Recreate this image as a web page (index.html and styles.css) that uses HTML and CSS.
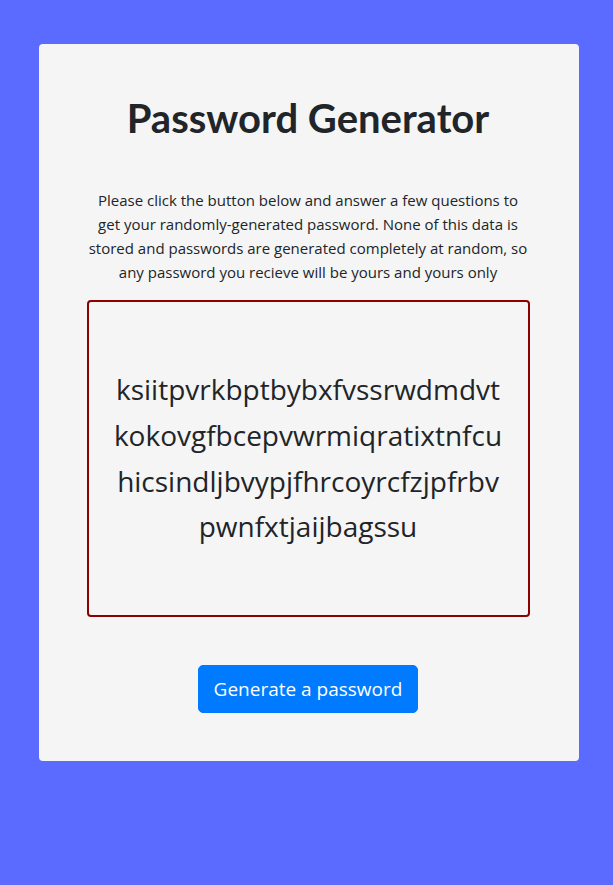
FILE: index.html
```html
<!DOCTYPE html>
<html lang="en">
<head>
<meta charset="utf-8">
<title>Password Generator</title>
<link rel="stylesheet" href="styles.css">
</head>
<body>
<main class="container">
  <section class="card">
    <h1 class="title">Password Generator</h1>
    <p class="intro">Please click the button below and answer a few questions to get your randomly-generated password. None of this data is stored and passwords are generated completely at random, so any password you recieve will be yours and yours only</p>
    <div class="output">
      <p class="password">ksiitpvrkbptbybxfvssrwdmdvt kokovgfbcepvwrmiqratixtnfcu hicsindljbvypjfhrcoyrcfzjpfrbv pwnfxtjaijbagssu</p>
    </div>
    <div class="actions">
      <button class="btn">Generate a password</button>
    </div>
  </section>
</main>
</body>
</html>
```
FILE: styles.css
```css
html, body {
  margin: 0;
  padding: 0;
}
body {
  background: #5c6bff;
  font-family: "Open Sans", "Noto Sans", sans-serif;
  color: #212529;
  min-height: 885px;
  padding-left: 4px;
}
.container {
  width: 540px;
  margin: 44px auto 0;
}
.card {
  background: #f5f5f5;
  border-radius: 4px;
  padding: 50px 49px 48px 48px;
  display: flex;
  flex-direction: column;
  align-items: stretch;
}
.title {
  margin: 0;
  font-family: "Lato", "Open Sans", sans-serif;
  font-size: 40px;
  line-height: 48px;
  font-weight: 700;
  text-align: center;
}
.intro {
  margin: 46px 0 16px;
  font-size: 15px;
  line-height: 24px;
  text-align: center;
}
.output {
  border: 2px solid #8b0000;
  border-radius: 4px;
  height: 313px;
  display: flex;
  align-items: center;
  justify-content: center;
  padding: 0 12px;
}
.password {
  margin: 0;
  font-size: 28px;
  line-height: 45.6px;
  text-align: center;
}
.actions {
  display: flex;
  justify-content: center;
  margin-top: 48px;
}
.btn {
  font-family: inherit;
  background: #007bff;
  color: #fff;
  border: 1px solid #007bff;
  border-radius: 5px;
  font-size: 19px;
  line-height: 30px;
  padding: 8px 15px;
  cursor: pointer;
}
```
